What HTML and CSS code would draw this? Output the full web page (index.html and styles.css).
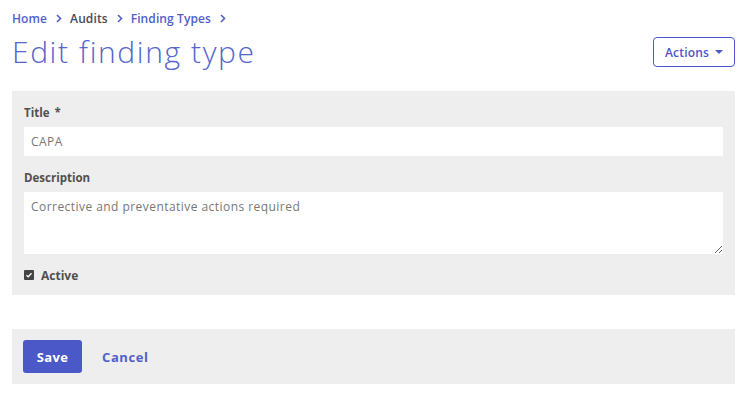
FILE: index.html
```html
<!DOCTYPE html>
<html>
<head>
<meta charset="utf-8">
<link rel="stylesheet" href="styles.css">
</head>
<body>
<div class="page">
  <nav class="crumbs">
    <a class="crumb link">Home</a><svg class="sep" width="6" height="9" viewBox="0 0 6 9"><path d="M1 1 L4.5 4.5 L1 8" fill="none" stroke="#5060c8" stroke-width="1.6"/></svg>
    <a class="crumb dark">Audits</a><svg class="sep" width="6" height="9" viewBox="0 0 6 9"><path d="M1 1 L4.5 4.5 L1 8" fill="none" stroke="#5060c8" stroke-width="1.6"/></svg>
    <a class="crumb link">Finding Types</a><svg class="sep" width="6" height="9" viewBox="0 0 6 9"><path d="M1 1 L4.5 4.5 L1 8" fill="none" stroke="#5060c8" stroke-width="1.6"/></svg>
  </nav>
  <div class="header">
    <h1 class="title">Edit finding type</h1>
    <button class="actions">Actions <span class="caret"></span></button>
  </div>
  <form class="panel">
    <label class="label">Title <span class="req">*</span></label>
    <input class="field" type="text" value="CAPA">
    <label class="label">Description</label>
    <textarea class="field area">Corrective and preventative actions required</textarea>
    <label class="check"><span class="box"><svg width="8" height="8" viewBox="0 0 8 8"><path d="M1.5 4.2 L3.2 5.8 L6.5 2.3" fill="none" stroke="#fff" stroke-width="1.3"/></svg></span>Active</label>
  </form>
  <div class="footer">
    <button class="save">Save</button>
    <a class="cancel">Cancel</a>
  </div>
</div>
</body>
</html>
```
FILE: styles.css
```css
* { box-sizing: border-box; }
body { margin: 0; font-family: "Open Sans", "Noto Sans", sans-serif; background: #fff; }
.page { padding: 10px 13px 0 12px; }
.crumbs { display: flex; align-items: center; font-size: 12px; font-weight: 600; height: 16px; letter-spacing: 0.1px; }
.crumb { text-decoration: none; }
.link { color: #5060c8; }
.dark { color: #4a4a55; }
.sep { margin: 0 8px 0 9px; }
.header { display: flex; justify-content: space-between; align-items: flex-start; margin-top: 6px; height: 59px; }
.title { margin: 0; font-size: 30px; font-weight: 300; color: #5565cc; letter-spacing: 1.6px; line-height: 40px; }
.actions { margin-top: 5px; height: 30px; width: 82px; border: 1.5px solid #4a58c8; border-radius: 4px; background: #fff; color: #4a58c8; font: 600 12px "Open Sans", sans-serif; letter-spacing: 0.2px; display: flex; align-items: center; justify-content: center; gap: 6px; padding: 0; }
.caret { width: 0; height: 0; border-left: 4px solid transparent; border-right: 4px solid transparent; border-top: 4px solid #4a58c8; }
.panel { background: #eeeeee; margin: 0; padding: 12px 12px 13px 12px; display: flex; flex-direction: column; }
.label { font-size: 11.5px; font-weight: 700; color: #505050; height: 16px; margin-top: 2px; }
.req { margin-left: 2px; }
.field { border: none; background: #fff; font: 400 12px "Open Sans", sans-serif; color: #777; padding: 0 7px; margin-top: 6px; margin-bottom: 12px; height: 29px; outline: none; width: 100%; letter-spacing: 0.45px; }
.area { height: 62px; padding: 6px 7px; resize: vertical; margin-top: 6px; margin-bottom: 14px; display: block; }
.check { display: flex; align-items: center; gap: 7px; font-size: 12px; font-weight: 700; color: #505050; height: 14px; }
.box { width: 10px; height: 10px; background: #444; border-radius: 1px; display: flex; align-items: center; justify-content: center; }
.footer { margin-top: 34px; background: #eeeeee; height: 55px; display: flex; align-items: center; padding: 0 11px; gap: 20px; }
.save { height: 33px; width: 59px; background: #4a58c8; color: #fff; border: none; border-radius: 3px; font: 700 13px "Open Sans", sans-serif; letter-spacing: 0.4px; }
.cancel { color: #5060c8; font-weight: 700; font-size: 13px; letter-spacing: 0.6px; }
```
